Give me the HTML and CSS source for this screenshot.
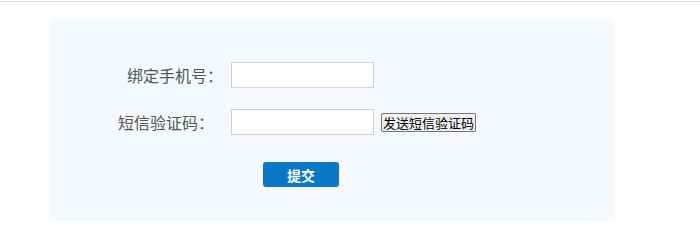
FILE: index.html
```html
<!DOCTYPE html>
<html lang="zh-CN">
<head>
    <meta charset="UTF-8">
    <meta name="viewport" content="width=device-width, initial-scale=1.0">
    <title>绑定手机号</title>
    <link rel="stylesheet" href="styles.css">
</head>
<body>
    <div class="top-line"></div>

    <div class="bind-panel">
        <form class="bind-form">
            <div class="form-row">
                <label class="form-label first" for="mobile">绑定手机号：</label>
                <input class="form-input" type="text" id="mobile">
            </div>
            <div class="form-row second">
                <label class="form-label" for="smscode">短信验证码：</label>
                <input class="form-input" type="text" id="smscode">
                <button type="button" class="send-btn">发送短信验证码</button>
            </div>
            <div class="submit-row">
                <button type="button" class="submit-btn">提交</button>
            </div>
        </form>
    </div>
</body>
</html>
```

FILE: styles.css
```css
body {
    margin: 0;
    background: #fff;
    font-family: "Liberation Sans", "Noto Sans CJK SC", sans-serif;
}
.top-line {
    height: 1px;
    margin-top: 1px;
    background: #dcdcdc;
}
.bind-panel {
    width: 564px;
    height: 201px;
    margin: 18px 0 0 50px;
    background: #f5f9fd;
    box-shadow: 0 0 2px #e8edf3;
    box-sizing: border-box;
}
.bind-form {
    padding-top: 42px;
}
.form-row {
    display: flex;
    align-items: center;
    height: 26px;
}
.form-row.second {
    margin-top: 21px;
}
.form-label {
    width: 181px;
    padding-right: 17px;
    box-sizing: border-box;
    text-align: right;
    font-size: 16px;
    color: #555;
}
.form-label.first {
    padding-right: 8px;
}
.form-input {
    width: 143px;
    height: 26px;
    margin: 0;
    border: 1px solid #cfcfcf;
    background: #fff;
    box-sizing: border-box;
}
.send-btn {
    margin-left: 7px;
    width: 95px;
    height: 19px;
    padding: 0 1px;
    font-size: 13px;
    font-family: "Noto Sans CJK SC", sans-serif;
    line-height: 17px;
    color: #000;
    background: #efefef;
    border: 1px solid #767676;
    border-radius: 2px;
    box-sizing: border-box;
}
.submit-row {
    margin-top: 27px;
    padding-left: 213px;
}
.submit-btn {
    width: 76px;
    height: 25px;
    border: none;
    border-radius: 3px;
    background: #0a77c7;
    color: #fff;
    font-size: 14px;
    font-weight: bold;
    font-family: "Noto Sans CJK SC", sans-serif;
    cursor: pointer;
}
```
